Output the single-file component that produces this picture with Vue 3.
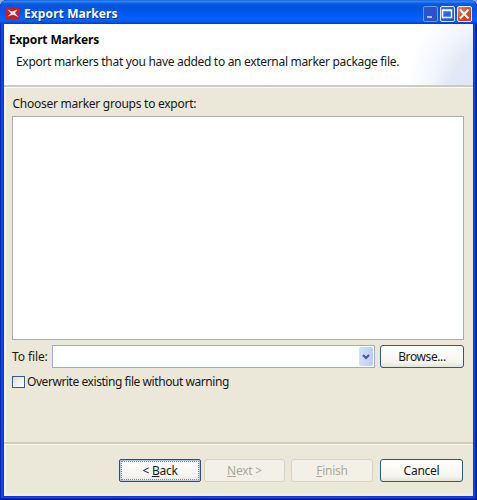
<script setup>
const description = 'Export markers that you have added to an external marker package file.'
</script>

<template>
  <div class="window">
    <header class="titlebar">
      <svg class="app-icon" width="14" height="13" viewBox="0 0 14 13">
        <rect width="13.5" height="12.5" rx="1" fill="#bd202b" />
        <path d="M1.5 2.5 L6 4.5 L11.5 2.5 L9 6 L12.5 10 L7 7.8 L1.5 9.5 L5 6.2 Z" fill="#f9e4e4" />
      </svg>
      <span class="title">Export Markers</span>
      <div class="controls">
        <span class="control minimize">
          <svg width="13" height="14" viewBox="0 0 13 14"><path d="M3 10h5" stroke="#bcb9e8" stroke-width="2" /></svg>
        </span>
        <span class="control maximize">
          <svg width="13" height="14" viewBox="0 0 13 14"><path d="M1.5 3.5h9v7h-9zM1 3h10" fill="none" stroke="#fff" stroke-width="1.5" /></svg>
        </span>
        <span class="control close">
          <svg width="13" height="14" viewBox="0 0 13 14"><path d="M2 2.5l8.5 9M10.5 2.5l-8.5 9" stroke="#fff" stroke-width="2" /></svg>
        </span>
      </div>
    </header>
    <main class="dialog">
      <section class="banner">
        <h1>Export Markers</h1>
        <p>{{ description }}</p>
      </section>
      <section class="content">
        <div class="list-label">Chooser marker groups to export:</div>
        <div class="list"></div>
        <div class="file-row">
          <label>To file:</label>
          <div class="combo">
            <span class="arrow">
              <svg width="8" height="6" viewBox="0 0 8 6"><path d="M1 1l3 3 3-3" fill="none" stroke="#435b8c" stroke-width="2" /></svg>
            </span>
          </div>
          <button class="button browse">Browse...</button>
        </div>
        <div class="check-row"><span class="checkbox"></span><span class="check-text">Overwrite existing file without warning</span></div>
      </section>
      <footer class="footer">
        <button class="button back"><span>&lt; <u>B</u>ack</span></button>
        <button class="button disabled next" disabled><span><u>N</u>ext &gt;</span></button>
        <button class="button disabled finish" disabled><span><u>F</u>inish</span></button>
        <button class="button cancel">Cancel</button>
      </footer>
    </main>
  </div>
</template>

<style>
body {
  background: #9aa9dc;
  overflow: hidden;
}
</style>

<style scoped>
* { box-sizing: border-box; }
.window {
  width: 477px;
  height: 500px;
  padding: 0 4px 4px;
  display: flex;
  flex-direction: column;
  border-radius: 7px 7px 0 0;
  background: #0839d8;
  box-shadow: inset 1px 0 #0828b8, inset -1px -1px #001795, inset -2px -2px #0525b8, inset 3px 0 #0549e6, inset -3px -3px #0753e9;
  font: 12px/16px "Noto Sans", "Open Sans", sans-serif;
  color: #171717;
  overflow: hidden;
}
.titlebar {
  height: 24px;
  flex: none;
  margin: 0 -4px;
  padding: 3px 5px 0 6px;
  display: flex;
  align-items: center;
  border-radius: 7px 7px 0 0;
  background: linear-gradient(#0b50cc 0, #3a8cf5 1px, #2479ee 2px, #0758df 4px, #0054e2 9px, #0259f5 14px, #0365fe 20px, #0255ee 22px, #0038c2 24px);
}
.app-icon { flex: none; }
.title {
  margin-left: 4px;
  letter-spacing: .1px;
  font-weight: 700;
  color: #fff;
  text-shadow: 1px 1px #0a3599;
  white-space: nowrap;
}
.controls { display: flex; gap: 2px; margin-left: auto; }
.control {
  width: 15px;
  height: 16px;
  border: 1px solid #e4ecff;
  border-radius: 2px;
  overflow: hidden;
}
.control svg { display: block; }
.minimize { background: #2a53cd; border-color: #6f98ec; }
.maximize { background: linear-gradient(135deg, #3b76ef, #1750d8); }
.close { background: linear-gradient(135deg, #eb8262, #d84220 60%, #c33c1d); }
.dialog {
  flex: 1;
  display: flex;
  flex-direction: column;
  background: #ebe8d9;
  box-shadow: inset 2px 0 #f7efdc, inset 0 -3px #f3edd7;
}
.banner {
  height: 63px;
  flex: none;
  padding: 8px 0 0 5px;
  border-bottom: 2px solid #cbcac5;
  background:
    radial-gradient(ellipse 92px 112px at 105% 125%, #dce4f5 0, #e1e8f6 52%, rgba(235, 240, 250, .65) 72%, rgba(255, 255, 255, 0) 100%) #fff;
  box-shadow: 0 1px #faf9f3;
}
h1 { margin: 0; font-size: 12px; line-height: 16px; letter-spacing: -.15px; font-weight: 700; color: #080808; }
p { margin: 6px 0 0 7px; letter-spacing: -.31px; white-space: nowrap; }
.content { padding: 9px 9px 0 8px; height: 355px; flex: none; }
.list-label { height: 20px; padding-left: .5px; letter-spacing: -.26px; white-space: nowrap; }
.list { height: 224px; border: 1px solid #a5acb6; background: #fff; }
.file-row { display: flex; margin-top: 5px; height: 23px; align-items: center; }
.file-row label { width: 40px; letter-spacing: -.1px; white-space: nowrap; }
.combo {
  width: 323px;
  height: 23px;
  padding: 1px;
  border: 1px solid #9aaec4;
  display: flex;
  justify-content: flex-end;
  background: #fff;
}
.arrow {
  width: 14px;
  display: flex;
  align-items: center;
  justify-content: center;
  background: linear-gradient(90deg, #d4e0fa, #bdcdf3);
  border-radius: 2px;
}
.button {
  height: 23px;
  margin: 0;
  padding: 0;
  border: 1px solid #315878;
  border-radius: 3px;
  background: linear-gradient(#fff, #f6f5f0 75%, #e5e2d7);
  font: inherit;
  letter-spacing: -.25px;
  color: #171717;
}
.browse { width: 84px; margin-left: 5px; letter-spacing: -.4px; }
.check-row { display: flex; align-items: center; margin-top: 5px; height: 17px; white-space: nowrap; }
.checkbox { width: 13px; height: 12px; border: 1px solid #345b80; background: linear-gradient(135deg, #dedfd9, #fff); }
.check-text { margin-left: 2px; letter-spacing: -.44px; }
.footer {
  flex: 1;
  display: flex;
  padding: 15px 9px 0 115px;
  border-top: 2px solid #cfccc0;
  box-shadow: inset 0 1px #faf8ed;
}
.back { width: 82px; padding: 1px; border: 1px solid #294e78; border-radius: 2px; box-shadow: inset 0 0 0 1px #b7c9e7; }
.back span { display: block; height: 17px; line-height: 17px; margin: 0 1px; outline: 1px dotted #888; }
.disabled { border-color: #d7d4c5; background: #f3f1e7; color: #aaa99b; }
.next { width: 81px; margin-left: 3px; }
.finish { width: 82px; margin-left: 6px; }
.cancel { width: 83px; margin-left: 7px; }
u { text-underline-offset: 1px; text-decoration-skip-ink: none; }
</style>
